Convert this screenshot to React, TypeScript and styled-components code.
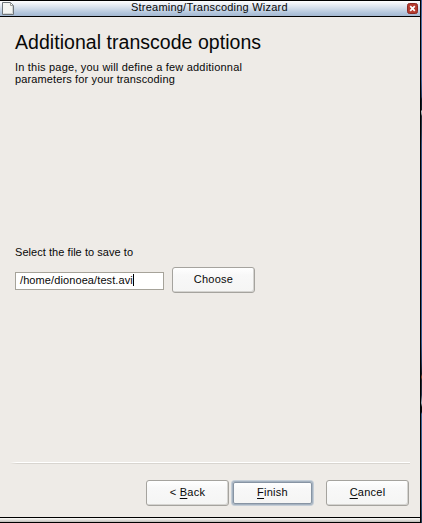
import React from "react";
import styled, { createGlobalStyle, css } from "styled-components";

const GlobalStyle = createGlobalStyle`
  *, *::before, *::after { box-sizing: border-box; }
  html, body { margin: 0; padding: 0; overflow: hidden; }
`;

const Desktop = styled.div`
  display: flex;
  width: 422px;
  height: 523px;
  background: #000;
  font: 11px/12px "Liberation Sans", Arial, sans-serif;
  color: #080808;
  white-space: nowrap;
`;

const Window = styled.div`
  display: flex;
  flex-direction: column;
  width: 421px;
  height: 523px;
  border: solid #000;
  border-width: 1px 1px 1px 0;
  background: #eeebe7;
`;

const DesktopEdge = styled.div`
  flex: none;
  width: 1px;
  height: 523px;
  background: linear-gradient(#3d5c96 0, #4d70a5 20px, #4568a0 80px, #263b61 97px,
    #101b2b 99px, #17212d 110px, #c5c8ca 111px, #8c9499 114px, #26313c 116px,
    #293b50 132px, #304d7b 145px, #355b91 342px, #263c5d 362px, #171822 374px,
    #8e4935 377px, #252530 380px, #26334c 395px, #a4afbb 403px, #080b12 407px,
    #080b12 412px, #3d6598 414px, #31547e 500px, #263b50 523px);
`;

const TitleBar = styled.header`
  display: flex;
  align-items: center;
  flex: none;
  height: 16px;
  border-bottom: 1px solid #000;
  background: linear-gradient(#ffffff 0, #f3f5f9 2px, #d4deea 7px, #b2c5dc 12px, #a4b8d1 15px);
`;

const TitleText = styled.h1`
  flex: 1;
  margin: 0;
  padding: 0 0 2px 117px;
  font-size: 11px;
  line-height: 13px;
  font-weight: 400;
  letter-spacing: 0.22px;
`;

const Content = styled.main`
  display: flex;
  flex-direction: column;
  flex: 1;
  padding: 14px 9px 0 15px;
`;

const Heading = styled.h2`
  margin: 0;
  font-size: 19.5px;
  line-height: 22px;
  font-weight: 400;
  letter-spacing: 0.04px;
`;

const Copy = styled.p<{ $spacing: string }>`
  margin: 0;
  letter-spacing: ${({ $spacing }) => $spacing};
`;

const Description = styled.div`
  margin-top: 8px;
`;

const FileSection = styled.section`
  margin-top: 161px;
`;

const FileRow = styled.div`
  display: flex;
  align-items: center;
  gap: 8px;
  margin-top: 9px;
`;

const FileField = styled.div`
  display: flex;
  align-items: center;
  width: 149px;
  height: 18px;
  margin-top: 1px;
  padding: 0 0 1px 4px;
  border: 1px solid #a6a39a;
  background: #fff;
  letter-spacing: 0.1px;
`;

const Caret = styled.span`
  width: 1px;
  height: 12px;
  background: #000;
`;

const Button = styled.button<{ $default?: boolean }>`
  display: flex;
  align-items: center;
  justify-content: center;
  width: 83px;
  height: 26px;
  padding: 0 0 2px;
  border: 1px solid #a5a39e;
  border-radius: 3px;
  background: linear-gradient(#ffffff, #f8f8f8 30%, #f5f5f4);
  box-shadow: inset -1px -1px 0 #d5d4d1;
  color: #080808;
  font: inherit;
  letter-spacing: 0.25px;
  white-space: pre;

  ${({ $default }) => $default && css`
    width: 79px;
    height: 22px;
    margin: 0 14px 0 4px;
    border-color: #8794a3;
    border-radius: 2px;
    box-shadow: 0 0 0 1px #a5b2c0, 0 0 0 2px #c4cdd6;
  `}
`;

const Mnemonic = styled.span`
  text-decoration: underline;
  text-decoration-thickness: 1px;
  text-underline-offset: 2px;
`;

const Separator = styled.div`
  height: 2px;
  margin: auto 1px 16px -5px;
  background: linear-gradient(#fff 50%, #d8d5d0 50%);
  mask-image: linear-gradient(90deg, transparent, #000 7px);
`;

const Actions = styled.footer`
  display: flex;
  align-items: center;
  justify-content: flex-end;
  height: 26px;
  margin: 0 2px 11px 0;
`;

const ResizeEdge = styled.div`
  flex: none;
  height: 5px;
  border-top: 1px solid #000;
  background: linear-gradient(#fafaf8 0, #e2e0dc 2px, #bdbbb7 4px);
`;

const DocumentIcon = () => (
  <svg width="14" height="15" viewBox="0 0 14 15" aria-hidden="true">
    <path d="M2.5 1.5H10.5L13.5 4.5V13.5H2.5Z" fill="#f4f5f2" stroke="#70777c" />
    <path d="M10.5 2V4.5H13" fill="#fff" stroke="#9c9d9a" />
    <path d="M3.5 12.5H12.5V5" fill="none" stroke="#d2d5d4" />
  </svg>
);

const CloseIcon = () => (
  <svg width="14" height="15" viewBox="0 0 14 15" aria-hidden="true">
    <rect x="1.5" y="2.5" width="10" height="10" rx="2" fill="#b53a2d" stroke="#8c2923" />
    <path d="M4.2 5.2l4.6 4.6m0-4.6l-4.6 4.6" stroke="#fff" strokeWidth="1.7" />
  </svg>
);

export default function App() {
  return (
    <>
      <GlobalStyle />
      <Desktop>
        <Window>
          <TitleBar>
            <DocumentIcon />
            <TitleText>Streaming/Transcoding Wizard</TitleText>
            <CloseIcon />
          </TitleBar>
          <Content>
            <Heading>Additional transcode options</Heading>
            <Description>
              <Copy $spacing="0.2px">In this page, you will define a few additionnal</Copy>
              <Copy $spacing="0.13px">parameters for your transcoding</Copy>
            </Description>
            <FileSection>
              <Copy $spacing="0.05px">Select the file to save to</Copy>
              <FileRow>
                <FileField>/home/dionoea/test.avi<Caret /></FileField>
                <Button>Choose</Button>
              </FileRow>
            </FileSection>
            <Separator />
            <Actions>
              <Button>&lt; <Mnemonic>B</Mnemonic>ack</Button>
              <Button $default><Mnemonic>F</Mnemonic>inish</Button>
              <Button><Mnemonic>C</Mnemonic>ancel</Button>
            </Actions>
          </Content>
          <ResizeEdge />
        </Window>
        <DesktopEdge />
      </Desktop>
    </>
  );
}
